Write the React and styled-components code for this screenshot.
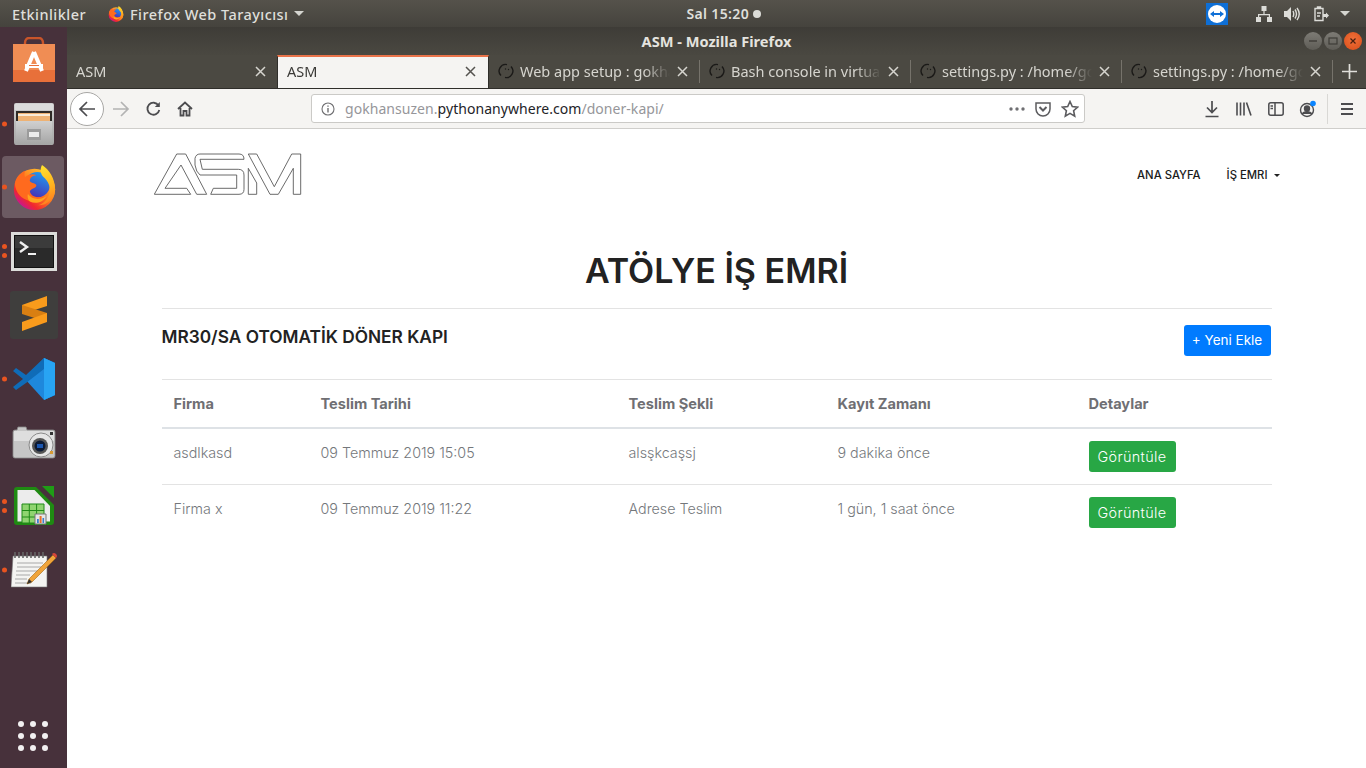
import React from 'react';
import styled, { createGlobalStyle } from 'styled-components';

const UI_FONT = `"Noto Sans", "Open Sans", sans-serif`;
const PAGE_FONT = `Inter, "Liberation Sans", sans-serif`;

const GlobalStyle = createGlobalStyle`
    html, body {
        margin: 0;
        height: 100%;
        overflow: hidden;
        background: #fff;
    }
    * { box-sizing: border-box; }
`;

const Desktop = styled.div`
    display: flex;
    flex-direction: column;
    width: 1366px;
    height: 768px;
    overflow: hidden;
`;

/* gnome top bar */
const TopBar = styled.div`
    display: flex;
    align-items: center;
    flex: 0 0 27px;
    background: linear-gradient(to bottom, #55524b, #45433d);
    color: #dfdfda;
    font-family: ${UI_FONT};
    font-size: 14.5px;
    font-weight: 500;
    letter-spacing: .45px;
    padding-left: 12px;
`;

const AppMenu = styled.div`
    display: flex;
    align-items: center;
    margin-left: 22px;
    gap: 6px;
`;

const Caret = styled.span`
    display: inline-block;
    width: 0;
    height: 0;
    border-left: ${p => p.$size || 5}px solid transparent;
    border-right: ${p => p.$size || 5}px solid transparent;
    border-top: ${p => p.$size || 5}px solid ${p => p.$color || '#d5d5d0'};
`;

const Clock = styled.div`
    display: flex;
    align-items: center;
    gap: 4px;
    margin-left: 382px;
    font-size: 14px;
    letter-spacing: .35px;
    font-weight: 600;
`;

const ClockDot = styled.span`
    width: 8px;
    height: 8px;
    border-radius: 50%;
    background: #dcdcd8;
`;

const Tray = styled.div`
    display: flex;
    align-items: center;
    margin-left: auto;
    padding-right: 16px;
`;

const TrayIcon = styled.span`
    display: flex;
    justify-content: center;
    width: ${p => p.$w}px;
    margin-left: ${p => p.$ml || 0}px;
`;

const Workspace = styled.div`
    display: flex;
    flex: 1;
    min-height: 0;
`;

/* ubuntu dock */
const Launcher = styled.div`
    display: flex;
    flex-direction: column;
    flex: 0 0 67px;
    padding-top: 1px;
    background: #47313b;
`;

const LauncherItem = styled.div`
    position: relative;
    display: flex;
    align-items: center;
    justify-content: center;
    height: 63.75px;
    padding-left: 1px;
    &::before {
        content: '';
        position: absolute;
        left: 2px;
        right: 3px;
        top: 0;
        bottom: 1px;
        border-radius: 4px;
        background: ${p => (p.$active ? '#6c5a62' : 'transparent')};
    }
    & > svg { position: relative; }
`;

const RunDots = styled.div`
    position: absolute;
    left: 2px;
    top: 50%;
    transform: translateY(-50%);
    display: flex;
    flex-direction: column;
    gap: 4px;
`;

const RunDot = styled.span`
    width: 5px;
    height: 5px;
    border-radius: 50%;
    background: #e95420;
`;

const AppsGrid = styled.div`
    display: grid;
    grid-template-columns: repeat(3, 6px);
    gap: 6px;
    margin: auto 0 17px 18px;
`;

const AppsDot = styled.span`
    width: 6px;
    height: 6px;
    border-radius: 50%;
    background: #f2f0f1;
`;

/* firefox window */
const Window = styled.div`
    display: flex;
    flex-direction: column;
    flex: 1;
    min-width: 0;
    background: #fff;
`;

const TitleBar = styled.div`
    position: relative;
    display: flex;
    align-items: center;
    justify-content: center;
    flex: 0 0 28px;
    background: linear-gradient(to bottom, #3e3c37, #4a4841);
    color: #e4e3df;
    font-family: ${UI_FONT};
    font-size: 14.6px;
    font-weight: 700;
`;

const WindowButtons = styled.div`
    position: absolute;
    right: 4px;
    top: 5px;
    display: flex;
    gap: 2px;
`;

const WindowButton = styled.span`
    display: flex;
    align-items: center;
    justify-content: center;
    width: 18px;
    height: 18px;
    border-radius: 50%;
    background: ${p => (p.$close ? 'radial-gradient(circle at 50% 40%, #f0703a, #d94d18)' : 'linear-gradient(#7d7b75, #5e5c56)')};
`;

const TabStrip = styled.div`
    display: flex;
    flex: 0 0 33px;
    background: #4b4942;
    border-bottom: 1px solid #2f2e2a;
    font-family: ${UI_FONT};
    font-size: 14.5px;
`;

const Tab = styled.div`
    position: relative;
    display: flex;
    align-items: center;
    flex: 0 0 ${p => (p.$active ? '212px' : '211px')};
    min-width: 0;
    height: ${p => (p.$active ? '33px' : '32px')};
    padding: ${p => (p.$active ? '0 12px 3px 9px' : '0 12px 0 9px')};
    gap: 7px;
    color: ${p => (p.$active ? '#3b3a37' : '#d6d5cf')};
    background: ${p => (p.$active ? '#f5f4f2' : 'transparent')};
    border-top: ${p => (p.$active ? '2px solid #e9734a' : 'none')};
    border-left: ${p => (p.$active ? '1px solid #2f2e2a' : 'none')};
    border-right: ${p => (p.$active ? '1px solid #2f2e2a' : 'none')};
    margin-left: ${p => (p.$active ? '-1px' : '0')};
    z-index: ${p => (p.$active ? 1 : 0)};
    &::after {
        content: '';
        display: ${p => (p.$divider ? 'block' : 'none')};
        position: absolute;
        right: 0;
        top: 5px;
        height: 23px;
        width: 1px;
        background: #76736b;
    }
`;

const TabTitle = styled.span`
    flex: 1;
    min-width: 0;
    white-space: nowrap;
    overflow: hidden;
    margin-left: ${p => (p.$spin ? '-1px' : '0')};
    -webkit-mask-image: linear-gradient(to left, transparent 0, #000 26px);
    mask-image: linear-gradient(to left, transparent 0, #000 26px);
`;

const NewTab = styled.div`
    display: flex;
    align-items: center;
    justify-content: center;
    flex: 1;
`;

const Toolbar = styled.div`
    display: flex;
    align-items: center;
    flex: 0 0 40px;
    padding: 0 3px;
    background: #f5f4f2;
    border-bottom: 1px solid #cfcecb;
`;

const BackButton = styled.div`
    display: flex;
    align-items: center;
    justify-content: center;
    width: 34px;
    height: 34px;
    border-radius: 50%;
    background: #fff;
    border: 1px solid #a8a7a5;
    margin-right: 1px;
`;

const ToolButton = styled.div`
    display: flex;
    align-items: center;
    justify-content: center;
    width: 32px;
    height: 32px;
`;

const UrlBar = styled.div`
    display: flex;
    align-items: center;
    width: 774px;
    height: 29px;
    margin-left: 110px;
    padding: 0 5px 0 9px;
    background: #fff;
    border: 1px solid #cbcac7;
    border-radius: 3px;
    font-family: ${UI_FONT};
    font-size: 14px;
    color: #96969a;
`;

const UrlText = styled.div`
    margin-left: 10px;
    flex: 1;
    white-space: nowrap;
    letter-spacing: .05px;
`;

const UrlHost = styled.span`
    color: #232327;
`;

const UrlActions = styled.div`
    display: flex;
    align-items: center;
    gap: 10px;
`;

const ToolbarRight = styled.div`
    display: flex;
    align-items: center;
    margin-left: auto;
`;

const ToolSeparator = styled.span`
    width: 1px;
    height: 30px;
    margin: 0 3px;
    background: #d9d8d5;
`;

/* the page itself */
const Page = styled.main`
    flex: 1;
    font-family: ${PAGE_FONT};
    color: #212529;
    background: #fff;
    padding-top: 23px;
`;

const Container = styled.div`
    width: 1110px;
    margin: 0 auto;
`;

const NavBar = styled.nav`
    display: flex;
    align-items: center;
    justify-content: space-between;
    height: 44px;
    margin: 0 -8px 0 -8px;
`;

const NavLinks = styled.div`
    display: flex;
    align-items: center;
    gap: 26px;
    padding-top: 2px;
`;

const NavLink = styled.a`
    display: flex;
    align-items: center;
    gap: 6px;
    font-size: 11.3px;
    font-weight: 500;
    color: #1b1b1b;
`;

const Title = styled.h1`
    margin: 50px 0 0;
    font-size: 34px;
    line-height: 50px;
    font-weight: 600;
    text-align: center;
    color: #222;
`;

const Rule = styled.hr`
    margin: 12px 0 0;
    border: 0;
    border-top: 1px solid #e3e3e3;
`;

const SectionHead = styled.div`
    display: flex;
    justify-content: space-between;
    padding: 16px 1px 0 0;
    margin-bottom: 23px;
`;

const SectionTitle = styled.h2`
    margin: 0;
    font-size: 17.3px;
    line-height: 24px;
    font-weight: 600;
    color: #222;
`;

const Button = styled.a`
    display: block;
    width: 87px;
    height: 31px;
    line-height: 31px;
    text-align: center;
    font-size: ${p => (p.$variant === 'success' ? '14.4px' : '13.5px')};
    letter-spacing: ${p => (p.$variant === 'success' ? '.35px' : '0')};
    border-radius: 3px;
    color: #fff;
    background: ${p => (p.$variant === 'success' ? '#28a745' : '#007bff')};
`;

const Table = styled.table`
    width: 1110px;
    table-layout: fixed;
    border-collapse: separate;
    border-spacing: 0;
`;

const Col = styled.col`
    width: ${p => p.$w}px;
`;

const Th = styled.th`
    padding: 12px;
    height: 50px;
    text-align: left;
    font-size: 14.6px;
    line-height: 22px;
    font-weight: 700;
    color: #6f6f73;
    border-top: 1px solid #e3e3e3;
    border-bottom: 2px solid #dee2e6;
`;

const Td = styled.td`
    padding: 12px;
    vertical-align: top;
    font-size: 14.3px;
    line-height: 24px;
    font-weight: 300;
    color: #74777b;
    border-bottom: ${p => (p.$last ? 'none' : '1px solid #e3e3e3')};
`;

/* icons */
const Firefox = ({ size, id }) => (
    <svg width={size} height={size} viewBox="0 0 48 48">
        <defs>
            <linearGradient id={`${id}a`} x1="0.85" y1="0.1" x2="0.15" y2="0.9">
                <stop offset="0" stopColor="#ffc62e" />
                <stop offset=".45" stopColor="#ff7b1f" />
                <stop offset=".8" stopColor="#f0272f" />
                <stop offset="1" stopColor="#c4139a" />
            </linearGradient>
            <linearGradient id={`${id}b`} x1="0.7" y1="0" x2="0.3" y2="1">
                <stop offset="0" stopColor="#1f9bf0" />
                <stop offset="1" stopColor="#4a2fb5" />
            </linearGradient>
            <linearGradient id={`${id}c`} x1="0.3" y1="0" x2="0.5" y2="1">
                <stop offset="0" stopColor="#ffe22e" />
                <stop offset=".6" stopColor="#ffb01f" />
                <stop offset="1" stopColor="#ff7b1f" />
            </linearGradient>
        </defs>
        <circle cx="24" cy="26" r="22" fill={`url(#${id}a)`} />
        <circle cx="27" cy="21" r="13.500" fill={`url(#${id}b)`} />
        <path d="M32 0c-3 6-1 11 3 14 6 6 7 14 3 21-2 4-6 7-10 8 10 0 18-8 18-17C46 15 40 5 32 0z" fill={`url(#${id}c)`} />
        <path d="M3 20c1-7 6-12 11-14-1 3-1 5 0 7 3-3 8-4 12-2-4 0-7 3-7 6 2 3 7 2 7 5-1 3-6 3-7 6 1 6 9 8 15 5-4 5-10 7-16 5C10 36 4 30 3 20z" fill="#ff6a1e" />
        <path d="M17 31c4 6 13 7 20 2-4 7-12 9-18 6-2-2-3-5-2-8z" fill="#ffa41f" />
    </svg>
);

const SoftwareIcon = () => (
    <svg width="44" height="46" viewBox="0 0 44 46">
        <path d="M13 11V6c0-3 2-5 4-5h10c2 0 4 2 4 5v5" fill="none" stroke="#c9552a" strokeWidth="2.400" />
        <path d="M1 7h42v38H1z" fill="#ee7f3e" />
        <path d="M1 7h42v26H1z" fill="#f08d54" />
        <path d="M1 33h42v12H1z" fill="#e8703a" />
        <path d="M22 15l-8 19M22 15l8 19" stroke="#fff" strokeWidth="4" fill="none" />
        <path d="M13 27h18v4H13z" fill="#fff" />
        <path d="M17 28.500h10" stroke="#e8703a" strokeWidth="1" />
    </svg>
);

const FilesIcon = () => (
    <svg width="42" height="44" viewBox="0 0 42 44">
        <defs>
            <linearGradient id="cab" x1="0" y1="0" x2="0" y2="1">
                <stop offset="0" stopColor="#d0d0d0" />
                <stop offset="1" stopColor="#a6a6a6" />
            </linearGradient>
        </defs>
        <path d="M1 3q0-2 2-2h36q2 0 2 2v37q0 3-2 3H3q-2 0-2-3z" fill="url(#cab)" />
        <path d="M2 2h38v6H2z" fill="#dcdcdc" />
        <path d="M3 9h36v13H3z" fill="#2e2a26" />
        <path d="M5 11h32v9H5z" fill="#eeb274" />
        <path d="M5 12h32v2H5z" fill="#f8ead6" />
        <path d="M3 19h36v23H3z" fill="url(#cab)" />
        <path d="M14 27h14v11H14z" fill="#9b9b9b" />
        <path d="M16 30h10v5H16z" fill="#ececec" />
    </svg>
);

const TerminalIcon = () => (
    <svg width="46" height="39" viewBox="0 0 46 39">
        <path d="M0 0h46v39H0z" fill="#dcdcda" />
        <path d="M3 3h40v33H3z" fill="#111" />
        <path d="M4 4h38v31H4z" fill="#2a2a2a" />
        <path d="M4 4h38v12H4z" fill="#3b3b3b" />
        <path d="M9 10l7 5-7 5" fill="none" stroke="#f0f0f0" strokeWidth="2.400" />
        <path d="M17 21h8v2h-8z" fill="#f0f0f0" />
    </svg>
);

const SublimeIcon = () => (
    <svg width="48" height="48" viewBox="0 0 48 48">
        <rect width="48" height="48" rx="3" fill="#3f3e3d" />
        <path d="M37 5v10L12 23v-9z" fill="#f99b1c" />
        <path d="M12 14v9l25 8v-9z" fill="#d97f12" />
        <path d="M37 22v9L12 40V31z" fill="#f99b1c" />
    </svg>
);

const VSCodeIcon = () => (
    <svg width="44" height="44" viewBox="0 0 44 44">
        <path d="M32 1L13 22l19 21 11-5V6z" fill="#1e88dc" />
        <path d="M32 1l11 5v32l-11 5V12L14 26 4 33 1 30l10-8L1 14l3-3 10 7z" fill="#0f6cb8" />
        <path d="M32 1l11 5v32l-11 5z" fill="#28a4f3" />
    </svg>
);

const CameraIcon = () => (
    <svg width="44" height="33" viewBox="0 0 44 33">
        <path d="M3 4h2l1-3h8l1 3h26q2 0 2 2v24q0 2-2 2H3q-2 0-2-2V6q0-2 2-2z" fill="#c6c6c6" stroke="#8c8c8c" strokeWidth=".8" />
        <path d="M2 5h40v10H2z" fill="#dedede" />
        <circle cx="29" cy="19" r="12" fill="#e6e6e6" stroke="#8a8a8a" />
        <circle cx="28" cy="20" r="8" fill="#555" />
        <circle cx="28" cy="20" r="5.500" fill="#0e1b34" />
        <path d="M25 18h6v4h-6z" fill="#1c57b0" />
        <rect x="38" y="25" width="3" height="3" fill="#d79a34" />
        <rect x="38" y="6" width="3" height="3" fill="#333" />
    </svg>
);

const CalcIcon = () => (
    <svg width="40" height="40" viewBox="0 0 40 40">
        <path d="M3 1h19l18 18v17q0 3-3 3H3q-3 0-3-3V4q0-3 3-3z" fill="#1f8a12" />
        <path d="M3.500 4h17l15.500 16v15.500H3.500z" fill="#ececec" />
        <path d="M28 0h12v12z" fill="#1f9c16" />
        <path d="M8 18h22v19H8z" fill="#8fd470" />
        <path d="M8 18h22v19H8zM8 24.500h22M8 31h22M15.300 18v19M22.600 18v19" stroke="#208a18" strokeWidth="1" fill="none" />
        <path d="M21 28h11v10H21z" fill="#e6e6e6" stroke="#777" strokeWidth="1" />
        <path d="M23 33h1.800v4H23z" fill="#3a7fd0" />
        <path d="M25.600 30h2v7h-2z" fill="#e8702a" />
        <path d="M28.500 32h1.600v5h-1.600z" fill="#3a7fd0" />
    </svg>
);

const NotesIcon = () => (
    <svg width="46" height="38" viewBox="0 0 46 38">
        <path d="M2 5h34v31H0z" fill="#f4f4f2" stroke="#777" strokeWidth=".6" />
        <path d="M4 1v6M8 1v6M12 1v6M16 1v6M20 1v6M24 1v6M28 1v6M32 1v6" stroke="#666" strokeWidth="1.600" />
        <path d="M6 12h26M6 16h24M5 20h22M5 24h14M4 28h12M4 32h16" stroke="#a8a8a8" strokeWidth="1" />
        <path d="M42 4l3 3-24 24-5 2 2-5z" fill="#f0a43a" stroke="#a56a14" strokeWidth=".6" />
        <path d="M41 3a2 2 0 0 1 4 4z" fill="#d7453a" />
        <path d="M16 33l2-5 3 3z" fill="#333" />
    </svg>
);

const Spinner = () => (
    <svg width="16" height="16" viewBox="0 0 16 16" fill="none" stroke="#1b1a18" strokeWidth="1.400">
        <path d="M3 12.500A6.500 6.500 0 0 1 9 1.600" />
        <path d="M13 3.500A6.500 6.500 0 0 1 7 14.400" />
        <circle cx="7.500" cy="6" r=".7" fill="#1b1a18" stroke="none" />
        <circle cx="10.500" cy="6.500" r=".7" fill="#1b1a18" stroke="none" />
    </svg>
);

const CloseGlyph = ({ color = '#d6d5cf' }) => (
    <svg width="11" height="11" viewBox="0 0 11 11" stroke={color} strokeWidth="1.500">
        <path d="M1 1l9 9M10 1l-9 9" />
    </svg>
);

const ToolIcon = ({ children, w = 18, h = 18, stroke = '#4c4c4f', sw = 1.7 }) => (
    <svg width={w} height={h} viewBox={`0 0 ${w} ${h}`} fill="none" stroke={stroke} strokeWidth={sw}>
        {children}
    </svg>
);

const LOGO_PATHS = [
    'M.3 42.300L22.700 2h9L52.700 42.300h-10L27 13 11 36.300h21.700l4 6z',
    'M41 6.300Q42 2 46 2h39q5 0 5 5.300H46l2.300 10H84.300Q90 17.300 90 23v14.300q0 5-5 5H56.700l2.600-6h23.400V23H46q-4-3-5-10z',
    'M94.300 2h8.400l17.600 32.700L137.700 2h9v40.300h-7.400V16.300L124.300 42.300H116z',
    'M94.300 16.300l8.400 14.700v11.300h-8.400z',
];

const Logo = () => (
    <svg width="148" height="44" viewBox="0 0 148 44" fill="#fff" stroke="#5a5a5a" strokeWidth=".9">
        {LOGO_PATHS.map(d => <path key={d} d={d} />)}
    </svg>
);

const DOCK = [
    { key: 'software', icon: <SoftwareIcon />, dots: 0 },
    { key: 'files', icon: <FilesIcon />, dots: 1 },
    { key: 'firefox', icon: <Firefox size={45} id="dock" />, dots: 1, active: true },
    { key: 'terminal', icon: <TerminalIcon />, dots: 2 },
    { key: 'sublime', icon: <SublimeIcon />, dots: 0 },
    { key: 'vscode', icon: <VSCodeIcon />, dots: 1 },
    { key: 'camera', icon: <CameraIcon />, dots: 0 },
    { key: 'calc', icon: <CalcIcon />, dots: 2 },
    { key: 'notes', icon: <NotesIcon />, dots: 1 },
];

const TABS = [
    { title: 'ASM' },
    { title: 'ASM', active: true },
    { title: 'Web app setup : gokhansuzen', spin: true, divider: true },
    { title: 'Bash console in virtualenv', spin: true, divider: true },
    { title: 'settings.py : /home/gokhansuzen', spin: true, divider: true },
    { title: 'settings.py : /home/gokhansuzen', spin: true, divider: true },
];

const COLUMNS = [
    { label: 'Firma', width: 147 },
    { label: 'Teslim Tarihi', width: 308 },
    { label: 'Teslim Şekli', width: 209 },
    { label: 'Kayıt Zamanı', width: 251 },
    { label: 'Detaylar', width: 195 },
];

const ROWS = [
    ['asdlkasd', '09 Temmuz 2019 15:05', 'alsşkcaşsj', '9 dakika önce'],
    ['Firma x', '09 Temmuz 2019 11:22', 'Adrese Teslim', '1 gün, 1 saat önce'],
];

export default function App() {
    return (
        <Desktop>
            <GlobalStyle />
            <TopBar>
                <span>Etkinlikler</span>
                <AppMenu>
                    <Firefox size={16} id="menu" />
                    <span>Firefox Web Tarayıcısı</span>
                    <Caret />
                </AppMenu>
                <Clock>
                    <span>Sal 15:20</span>
                    <ClockDot />
                </Clock>
                <Tray>
                    <TrayIcon $w={22}>
                        <svg width="22" height="22" viewBox="0 0 22 22">
                            <rect width="22" height="22" fill="#0e6fd6" />
                            <circle cx="11" cy="11" r="9" fill="#fff" />
                            <path d="M4 11l4-3v2h6V8l4 3-4 3v-2H8v2z" fill="#0e6fd6" />
                        </svg>
                    </TrayIcon>
                    <TrayIcon $w={16} $ml={28}>
                        <svg width="16" height="16" viewBox="0 0 16 16" fill="#dcdcd8">
                            <path d="M5.500 0h5v5h-5zM0 11h5v5H0zM11 11h5v5h-5z" />
                            <path d="M7.400 5h1.200v3H14v3h-1.200V9.200H3.200V11H2V8h5.400z" />
                        </svg>
                    </TrayIcon>
                    <TrayIcon $w={16} $ml={12}>
                        <svg width="16" height="16" viewBox="0 0 16 16" fill="none" stroke="#dcdcd8">
                            <path d="M0 5h3l4-4v14l-4-4H0z" fill="#dcdcd8" stroke="none" />
                            <path d="M9 5c1 2 1 4 0 6M11 3.500c2 3 2 6 0 9M13 2c3 4 3 8 0 12" strokeWidth="1.400" />
                        </svg>
                    </TrayIcon>
                    <TrayIcon $w={16} $ml={13}>
                        <svg width="16" height="16" viewBox="0 0 16 16" fill="none" stroke="#dcdcd8" strokeWidth="1.400">
                            <path d="M2 2.500h8v12H2zM4.500 2.500V1h3v1.500" />
                            <path d="M4 7h4M4 10h3" />
                            <path d="M10 8h3V6.500l3 3-3 3V11h-3z" fill="#dcdcd8" stroke="none" />
                        </svg>
                    </TrayIcon>
                    <TrayIcon $w={10} $ml={11}>
                        <Caret />
                    </TrayIcon>
                </Tray>
            </TopBar>
            <Workspace>
                <Launcher>
                    {DOCK.map(item => (
                        <LauncherItem key={item.key} $active={item.active}>
                            {item.dots > 0 && (
                                <RunDots>
                                    {Array.from({ length: item.dots }, (_, i) => <RunDot key={i} />)}
                                </RunDots>
                            )}
                            {item.icon}
                        </LauncherItem>
                    ))}
                    <AppsGrid>
                        {Array.from({ length: 9 }, (_, i) => <AppsDot key={i} />)}
                    </AppsGrid>
                </Launcher>
                <Window>
                    <TitleBar>
                        ASM - Mozilla Firefox
                        <WindowButtons>
                            <WindowButton>
                                <svg width="10" height="10" viewBox="0 0 10 10"><path d="M1 5h8" stroke="#3e3c37" strokeWidth="1.400" /></svg>
                            </WindowButton>
                            <WindowButton>
                                <svg width="10" height="10" viewBox="0 0 10 10"><rect x="1" y="2" width="8" height="6" fill="none" stroke="#3e3c37" strokeWidth="1.200" /></svg>
                            </WindowButton>
                            <WindowButton $close>
                                <svg width="8" height="8" viewBox="0 0 8 8"><path d="M1.500 1.500l5 5M6.500 1.500l-5 5" stroke="#4a2010" strokeWidth="1.200" /></svg>
                            </WindowButton>
                        </WindowButtons>
                    </TitleBar>
                    <TabStrip>
                        {TABS.map((tab, i) => (
                            <Tab key={i} $active={tab.active} $divider={tab.divider}>
                                {tab.spin && <Spinner />}
                                <TabTitle $spin={tab.spin}>{tab.title}</TabTitle>
                                <CloseGlyph color={tab.active ? '#55534f' : '#d6d5cf'} />
                            </Tab>
                        ))}
                        <NewTab>
                            <svg width="15" height="15" viewBox="0 0 15 15" stroke="#e0dfda" strokeWidth="1.700"><path d="M7.500 0v15M0 7.500h15" /></svg>
                        </NewTab>
                    </TabStrip>
                    <Toolbar>
                        <BackButton>
                            <ToolIcon>
                                <path d="M17 9H2M9 2L2 9l7 7" />
                            </ToolIcon>
                        </BackButton>
                        <ToolButton>
                            <ToolIcon stroke="#b3b3b3">
                                <path d="M1 9h15M9 2l7 7-7 7" />
                            </ToolIcon>
                        </ToolButton>
                        <ToolButton>
                            <ToolIcon w={16} h={16} sw={1.800}>
                                <path d="M13.500 4.500A6 6 0 1 0 14.300 9" />
                                <path d="M14.800 1v5h-5z" fill="#4c4c4f" stroke="none" />
                            </ToolIcon>
                        </ToolButton>
                        <ToolButton>
                            <ToolIcon w={16} h={16} sw={1.800}>
                                <path d="M1 8l7-6.500L15 8M3.500 7v7.500h3V10h3v4.500h3V7" />
                            </ToolIcon>
                        </ToolButton>
                        <UrlBar>
                            <ToolIcon w={14} h={14} sw={1.100} stroke="#6f6f72">
                                <circle cx="7" cy="7" r="6" />
                                <path d="M7 6v4.500M7 3.400v1.400" strokeWidth="1.400" />
                            </ToolIcon>
                            <UrlText>gokhansuzen.<UrlHost>pythonanywhere.com</UrlHost>/doner-kapi/</UrlText>
                            <UrlActions>
                                <svg width="16" height="4" viewBox="0 0 16 4" fill="#6f6f72">
                                    <circle cx="2" cy="2" r="1.700" /><circle cx="8" cy="2" r="1.700" /><circle cx="14" cy="2" r="1.700" />
                                </svg>
                                <ToolIcon w={16} h={16} sw={1.500} stroke="#5c5c5f">
                                    <path d="M1 2h14v6a7 7 0 0 1-14 0z" />
                                    <path d="M4.500 6L8 9.500 11.500 6" strokeWidth="2" />
                                </ToolIcon>
                                <ToolIcon w={18} h={18} sw={1.600} stroke="#5c5c5f">
                                    <path d="M9 1.500l2.300 5 5.300.6-4 3.600 1.100 5.400L9 13.400l-4.700 2.700 1.100-5.400-4-3.600 5.300-.6z" />
                                </ToolIcon>
                            </UrlActions>
                        </UrlBar>
                        <ToolbarRight>
                            <ToolButton>
                                <ToolIcon w={16} h={18}>
                                    <path d="M8 1v11M3 7.500L8 12.500l5-5M1.500 16.500h13" />
                                </ToolIcon>
                            </ToolButton>
                            <ToolButton>
                                <ToolIcon w={16} h={16} sw={1.600}>
                                    <path d="M1 1.500v13M4.500 1.500v13M8 1.500v13M10.500 1.500l4.500 13" />
                                </ToolIcon>
                            </ToolButton>
                            <ToolButton>
                                <ToolIcon w={16} h={14} sw={1.500}>
                                    <rect x=".8" y=".8" width="14.400" height="12.400" rx="2" />
                                    <path d="M7 1v12M2.500 4H5M2.500 6.500H5" />
                                </ToolIcon>
                            </ToolButton>
                            <ToolButton>
                                <svg width="18" height="18" viewBox="0 0 18 18" fill="none" stroke="#4c4c4f" strokeWidth="1.400">
                                    <circle cx="8" cy="10" r="6.500" />
                                    <circle cx="8" cy="8.500" r="2.500" fill="#4c4c4f" />
                                    <path d="M3.500 14c1-3 8-3 9 0" fill="#4c4c4f" />
                                    <circle cx="14" cy="3.500" r="2.800" fill="#0a84ff" stroke="none" />
                                </svg>
                            </ToolButton>
                            <ToolSeparator />
                            <ToolButton>
                                <ToolIcon w={14} h={14} sw={1.800}>
                                    <path d="M1 2h12M1 7h12M1 12h12" />
                                </ToolIcon>
                            </ToolButton>
                        </ToolbarRight>
                    </Toolbar>
                    <Page>
                        <Container>
                            <NavBar>
                                <Logo />
                                <NavLinks>
                                    <NavLink>ANA SAYFA</NavLink>
                                    <NavLink>
                                        İŞ EMRI
                                        <Caret $size={3} $color="#222" />
                                    </NavLink>
                                </NavLinks>
                            </NavBar>
                            <Title>ATÖLYE İŞ EMRİ</Title>
                            <Rule />
                            <SectionHead>
                                <SectionTitle>MR30/SA OTOMATİK DÖNER KAPI</SectionTitle>
                                <Button>+ Yeni Ekle</Button>
                            </SectionHead>
                            <Table>
                                <colgroup>
                                    {COLUMNS.map(col => <Col key={col.label} $w={col.width} />)}
                                </colgroup>
                                <thead>
                                    <tr>
                                        {COLUMNS.map(col => <Th key={col.label}>{col.label}</Th>)}
                                    </tr>
                                </thead>
                                <tbody>
                                    {ROWS.map((row, r) => {
                                        const last = r === ROWS.length - 1;
                                        return (
                                            <tr key={row[0]}>
                                                {row.map(cell => <Td key={cell} $last={last}>{cell}</Td>)}
                                                <Td $last={last}><Button $variant="success">Görüntüle</Button></Td>
                                            </tr>
                                        );
                                    })}
                                </tbody>
                            </Table>
                        </Container>
                    </Page>
                </Window>
            </Workspace>
        </Desktop>
    );
}
